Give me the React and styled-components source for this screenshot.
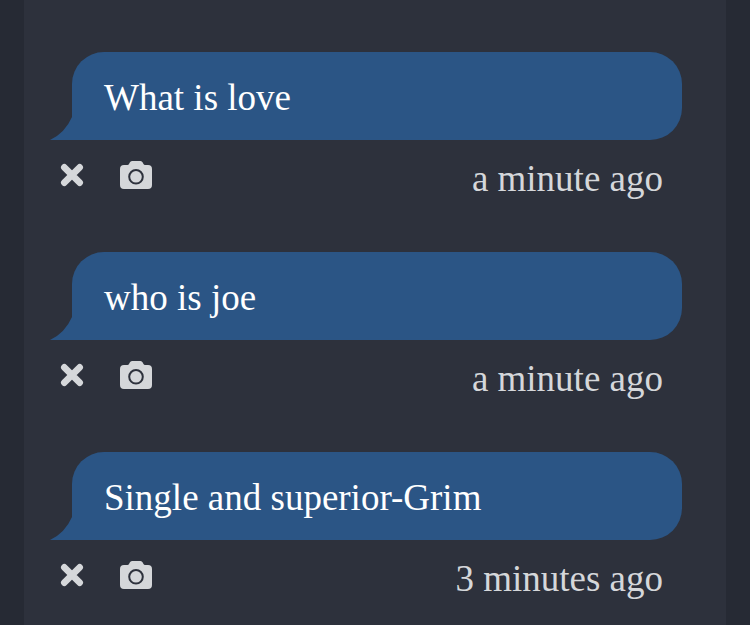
import React from 'react'
import styled, { createGlobalStyle } from 'styled-components'

const GlobalStyle = createGlobalStyle`
  * {
    box-sizing: border-box;
  }

  body {
    margin: 0;
    background: #262a34;
    font-family: 'Liberation Serif', 'Times New Roman', serif;
  }
`

const Page = styled.div`
  min-height: 100vh;
  padding: 0 24px;
  display: flex;
`

const Panel = styled.main`
  flex: 1;
  min-width: 0;
  padding: 52px 44px 24px 48px;
  background: #2d313c;
`

const MessageList = styled.ul`
  margin: 0;
  padding: 0;
  list-style: none;
  display: flex;
  flex-direction: column;
  gap: 52px;
`

const Bubble = styled.p`
  position: relative;
  margin: 0;
  padding: 26px 32px 22px;
  border-radius: 32px 32px 32px 0;
  background: #2b5585;
  color: #fff;
  font-size: 37px;
  line-height: 40px;
`

const Tail = styled.svg`
  position: absolute;
  right: 100%;
  bottom: 0;
  width: 22px;
  height: 23px;
  fill: #2b5585;
`

const Meta = styled.div`
  height: 60px;
  padding-right: 19px;
  display: flex;
  justify-content: space-between;
`

const Actions = styled.div`
  display: flex;
  align-items: flex-start;
  gap: 32px;
  margin-left: -16px;
  padding-top: 19px;
`

const IconButton = styled.button`
  width: 32px;
  height: 32px;
  padding: 0;
  border: 0;
  background: none;
  color: #d5d7da;
  cursor: pointer;

  svg {
    display: block;
  }
`

const Time = styled.time`
  padding-top: 19px;
  color: #d5d7da;
  font-size: 37px;
  line-height: 40px;
`

const CloseIcon = () => (
  <svg width="32" height="32" viewBox="0 0 32 32" aria-hidden="true">
    <path
      d="M8.300 8.300l15.400 15.400M23.700 8.300L8.300 23.700"
      fill="none"
      stroke="currentColor"
      strokeWidth="6.600"
      strokeLinecap="round"
    />
  </svg>
)

const CameraIcon = () => (
  <svg width="32" height="32" viewBox="0 0 32 32" aria-hidden="true">
    <path
      d="M4 6h3.500q1 0 1.500-1l.8-1.500Q10.500 2 12 2h8.500q1.500 0 2.200 1.500l.8 1.500q.5 1 1.500 1h3a4 4 0 0 1 4 4v16a4 4 0 0 1-4 4H4a4 4 0 0 1-4-4V10a4 4 0 0 1 4-4z"
      fill="currentColor"
    />
    <circle cx="16" cy="17.800" r="6.800" fill="none" stroke="#2d313c" strokeWidth="2" />
  </svg>
)

const messages = [
  { id: 1, text: 'What is love', time: 'a minute ago' },
  { id: 2, text: 'who is joe', time: 'a minute ago' },
  { id: 3, text: 'Single and superior-Grim', time: '3 minutes ago' },
]

const Message = ({ text, time }) => (
  <li>
    <Bubble>
      <Tail viewBox="0 0 22 23" aria-hidden="true">
        <path d="M22 0Q15 16 0 23H22z" />
      </Tail>
      {text}
    </Bubble>
    <Meta>
      <Actions>
        <IconButton type="button" aria-label="Delete">
          <CloseIcon />
        </IconButton>
        <IconButton type="button" aria-label="Take photo">
          <CameraIcon />
        </IconButton>
      </Actions>
      <Time>{time}</Time>
    </Meta>
  </li>
)

const App = () => (
  <>
    <GlobalStyle />
    <Page>
      <Panel>
        <MessageList>
          {messages.map(message => (
            <Message key={message.id} text={message.text} time={message.time} />
          ))}
        </MessageList>
      </Panel>
    </Page>
  </>
)

export default App
